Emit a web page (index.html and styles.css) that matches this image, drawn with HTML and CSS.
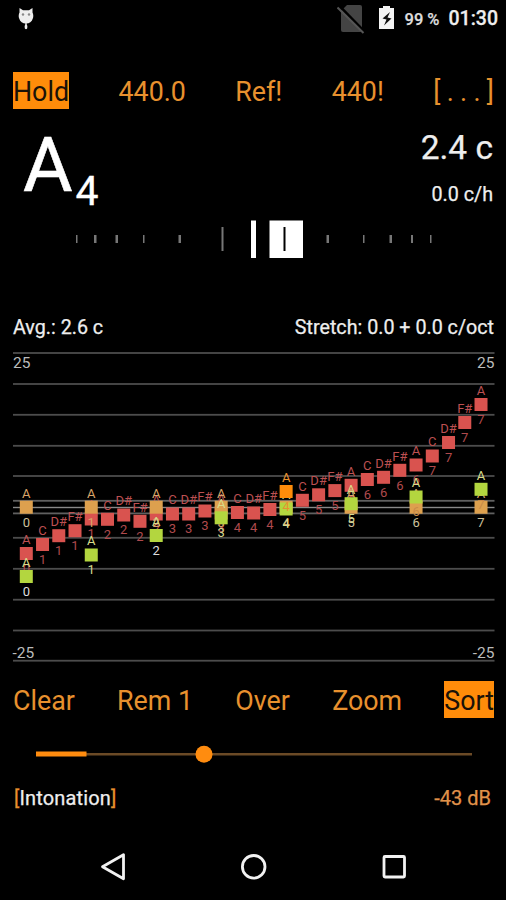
FILE: index.html
```
<!DOCTYPE html>
<html lang="en">
<head>
    <meta charset="utf-8">
    <title>Tuner</title>
    <link rel="stylesheet" href="styles.css">
</head>
<body>
    <header class="status">
        <svg class="icon-cat" width="18" height="24" viewBox="0 0 18 24">
            <path d="M2.500 1l3.500 2.300h6l3.500-2.300v4.500c1 2 1 4.500.3 6C14.800 14.800 12.500 16.500 9 16.500s-5.800-1.700-6.800-5C1.500 10 1.500 7.500 2.500 5.500z" fill="#eee"/>
            <path d="M9 16v3" stroke="#ddd" stroke-width="1.500"/>
            <ellipse cx="9" cy="19.700" rx="1.400" ry="2.500" fill="#eee"/>
            <circle cx="6" cy="7.500" r="1.200" fill="#888"/>
            <circle cx="12" cy="7.500" r="1.200" fill="#888"/>
        </svg>
        <div class="status-right">
            <svg class="icon-sim" width="28" height="30" viewBox="0 0 28 30">
                <path d="M10 1h13q2 0 2 2v23q0 2-2 2H6q-2 0-2-2V7z" fill="#444"/>
                <path d="M2 1.500L29 29" stroke="#000" stroke-width="2.500"/>
                <path d="M.5 3.500L26.500 29" stroke="#555" stroke-width="2"/>
            </svg>
            <svg class="icon-battery" width="16" height="24" viewBox="0 0 16 24">
                <path d="M4 0h7v2h4v21H0V2h4z" fill="#f4f4f4"/>
                <path d="M11 6L3.500 12.500l4 1L5 19.500 12.500 12.500 8.500 11.500z" fill="#111"/>
            </svg>
            <span class="battery">99 %</span>
            <span class="clock">01:30</span>
        </div>
    </header>

    <nav class="bar bar-top">
        <span class="btn active">Hold</span>
        <span class="btn">440.0</span>
        <span class="btn">Ref!</span>
        <span class="btn">440!</span>
        <span class="btn dots">[...]</span>
    </nav>

    <section class="reading">
        <div class="note">A<span class="octave">4</span></div>
        <div class="cents">
            <div class="cents-now">2.4 c</div>
            <div class="cents-rate">0.0 c/h</div>
        </div>
    </section>

    <svg class="meter" width="506" height="38" viewBox="0 220 506 38">
        <g fill="#777">
            <rect x="76" y="235" width="1.500" height="8"/>
            <rect x="94" y="235" width="2.500" height="8"/>
            <rect x="115.500" y="235" width="2.500" height="8"/>
            <rect x="143" y="235" width="1.500" height="8"/>
            <rect x="178.500" y="235" width="2.500" height="8"/>
            <rect x="221.500" y="227" width="2" height="24"/>
            <rect x="326.500" y="235" width="2.500" height="8"/>
            <rect x="363" y="235" width="1.500" height="8"/>
            <rect x="389.500" y="235" width="2.500" height="8"/>
            <rect x="411" y="235" width="2" height="8"/>
            <rect x="430" y="235" width="1.500" height="8"/>
        </g>
        <rect x="251" y="220.500" width="5" height="37.500" fill="#fff"/>
        <rect x="269.500" y="220.500" width="33.500" height="37.500" fill="#fff"/>
        <rect x="283.500" y="227" width="2" height="24" fill="#000"/>
    </svg>

    <div class="summary">
        <span>Avg.: 2.6 c</span>
        <span>Stretch: 0.0 + 0.0 c/oct</span>
    </div>

    <svg id="chart" class="chart" width="506" height="320" viewBox="0 346 506 320"></svg>

    <nav class="bar bar-bottom">
        <span class="btn">Clear</span>
        <span class="btn">Rem 1</span>
        <span class="btn">Over</span>
        <span class="btn">Zoom</span>
        <span class="btn active">Sort</span>
    </nav>

    <svg class="slider" width="506" height="20" viewBox="0 744 506 20">
        <rect x="36" y="753" width="436" height="2.500" fill="#6b4a26"/>
        <rect x="36" y="751.500" width="50.500" height="5" fill="#ff8c0f"/>
        <circle cx="204" cy="754.300" r="8.500" fill="#ff8c0f"/>
    </svg>

    <footer class="footer">
        <span class="temper"><i>[</i>Intonation<i>]</i></span>
        <span class="level">-43 dB</span>
    </footer>

    <svg class="navbar" width="506" height="34" viewBox="0 850 506 34">
        <g fill="none" stroke="#f2f2f2" stroke-width="2.800" stroke-linejoin="round">
            <path d="M102.500 866.800L123.500 854.800v24z"/>
            <circle cx="253.700" cy="866.800" r="11.300"/>
            <rect x="384" y="856.500" width="20.500" height="20.500" rx="1"/>
        </g>
    </svg>

    <script src="chart.js"></script>
</body>
</html>
```
FILE: styles.css
```
body {
    margin: 0;
    width: 506px;
    height: 900px;
    overflow: hidden;
    background-color: #000;
    color: #eee;
    font-family: Roboto, sans-serif;
    -webkit-text-stroke: 0.25px;
}

svg {
    display: block;
}

.status {
    display: flex;
    justify-content: space-between;
    height: 72px;
    padding: 0 8px 0 17px;
    box-sizing: border-box;
}

.icon-cat {
    margin-top: 7px;
}

.status-right {
    display: flex;
    font-weight: 500;
    line-height: 38px;
}

.icon-sim {
    margin: 4px 14px 0 0;
}

.icon-battery {
    margin: 6px 10px 0 0;
}

.battery {
    width: 44px;
    font-size: 16.5px;
    line-height: 39px;
    color: #ddd;
}

.clock {
    font-size: 19.5px;
}

/* button rows */
.bar {
    display: flex;
    justify-content: space-between;
    padding: 0 12px 0 13px;
    font-size: 26.8px;
    line-height: 41px;
    color: #e8912e;
    -webkit-text-stroke: 0;
}

.btn.active {
    background-color: #ff8c0a;
    color: #1a1208;
}

.dots {
    letter-spacing: 6.3px;
    margin-right: -6.3px;
}

.bar-top,
.bar-bottom {
    height: 37px;
}

/* current note */
.reading {
    display: flex;
    justify-content: space-between;
    height: 111px;
    padding: 0 13px 0 23px;
}

.note {
    font-size: 76px;
    line-height: 113px;
    color: #fff;
    -webkit-text-stroke: 0.6px;
}

.octave {
    display: inline-block;
    margin-left: 3px;
    font-size: 41px;
    line-height: 1;
    transform: translateY(14px);
    -webkit-text-stroke: 0.3px;
}

.cents {
    text-align: right;
}

.cents-now {
    margin-top: 19px;
    font-size: 33.5px;
    line-height: 40px;
}

.cents-rate {
    margin-top: 15px;
    font-size: 19.7px;
    line-height: 24px;
}

.summary {
    display: flex;
    justify-content: space-between;
    height: 30px;
    margin-top: 58px;
    padding: 0 12px 0 13px;
    font-size: 19.7px;
    line-height: 24px;
}

.chart text {
    font-size: 13px;
    text-anchor: middle;
}

.chart .scale {
    font-size: 15.5px;
    fill: #bbb;
    text-anchor: start;
}

.chart .scale.right {
    text-anchor: end;
}

.bar-bottom {
    margin-top: 15px;
}

.slider {
    margin-top: 26px;
}

.footer {
    display: flex;
    justify-content: space-between;
    height: 24px;
    margin-top: 22px;
    padding: 0 15px 0 14px;
    font-size: 20px;
    line-height: 24px;
}

.temper {
    letter-spacing: 0.15px;
}

.footer i {
    font-style: normal;
    color: #e8912e;
}

.level {
    color: #e0924a;
}

.navbar {
    margin-top: 40px;
}
```
FILE: chart.js
```
const chart = document.getElementById('chart');

function add(tag, attrs, text) {
    const el = document.createElementNS('http://www.w3.org/2000/svg', tag);
    for (const key in attrs) {
        el.setAttribute(key, attrs[key]);
    }
    if (text !== undefined) {
        el.textContent = text;
    }
    chart.appendChild(el);
}

// grid, one line every 5 cents
[353, 384, 414.8, 445.8, 476, 537.8, 568.8, 599.7, 630.5, 660.7].forEach(function (y) {
    add('rect', {x: 13, y: y - 0.9, width: 481.5, height: 1.8, fill: '#4c4c4c'});
});
// zero line and +-1 cent
[500.8, 513.4].forEach(function (y) {
    add('rect', {x: 13, y: y - 0.9, width: 481.5, height: 1.8, fill: '#606060'});
});
add('rect', {x: 13, y: 506.8, width: 481.5, height: 1.4, fill: '#888'});

add('text', {x: 13, y: 368, class: 'scale'}, '25');
add('text', {x: 494.5, y: 368, class: 'scale right'}, '25');
add('text', {x: 12.5, y: 658, class: 'scale'}, '-25');
add('text', {x: 494.5, y: 658, class: 'scale right'}, '-25');

const names = ['A', 'C', 'D#', 'F#'];

// i counts minor thirds from A0
function point(i, y, fill, nameColor, octaveColor) {
    const x = 26.3 + 16.24 * i;
    const octave = Math.floor((i + 3) / 4);
    add('rect', {x: x - 6.5, y: y - 6.5, width: 13, height: 13, fill: fill});
    add('text', {x: x, y: y - 9.7, fill: nameColor}, names[i % 4]);
    add('text', {x: x, y: y + 19.3, fill: octaveColor}, octave);
}

const measured = [553.5, 544.5, 535.7, 530.7, 519, 519.3, 515, 521.3, 514, 514, 514, 511,
    513, 512.5, 513, 509.5, null, 500.3, 494.8, 490.6, 485.3, 479.5, 477.3, 470.3,
    465, 456, 442.5, 422.5, 404.5];
measured.forEach(function (y, i) {
    if (y !== null) {
        point(i, y, '#d9534f', '#bd5052', '#b04a4d');
    }
});

for (let k = 0; k < 8; k++) {
    point(k * 4, 507.2, '#dda04e', '#d8a468', k === 0 || k > 4 ? '#ccc09c' : '#d8a468');
}

const notes = [576.5, 555, 535.5, 517.8, 509, 503.7, 497, 489.3];
notes.forEach(function (y, k) {
    let octaveColor = '#d4d990';
    if (k === 0 || k === 2) {
        octaveColor = '#ddd';
    } else if (k > 5) {
        // falls on the reference square
        octaveColor = '#c98a48';
    }
    point(k * 4, y, '#b3d63f', '#d9dc8a', octaveColor);
});

// current reading
point(16, 491.5, '#ff8c0a', '#e8912e', '#e8912e');
```
